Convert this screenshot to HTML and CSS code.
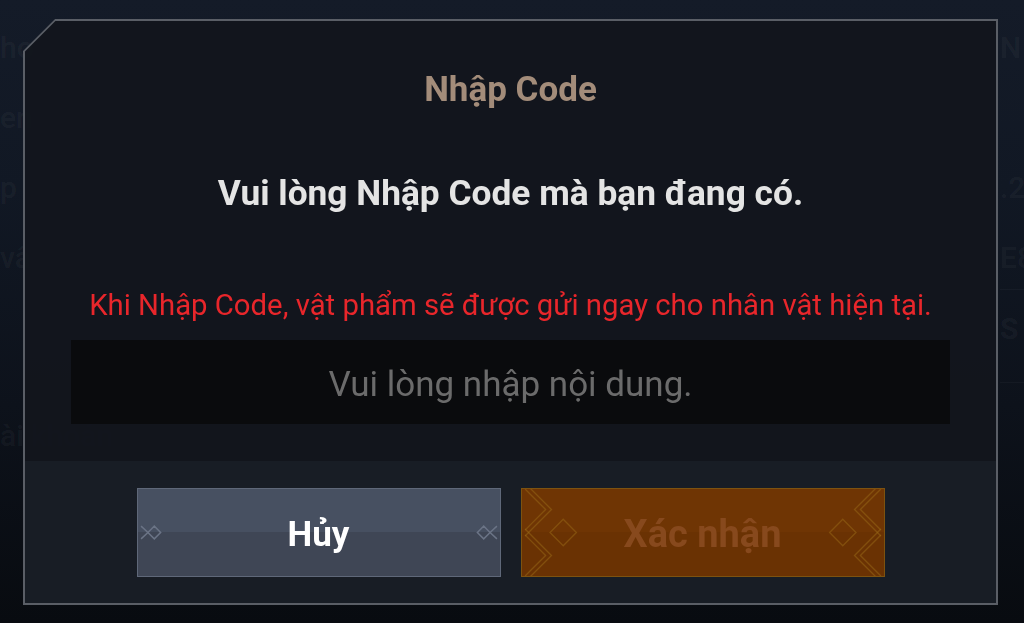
FILE: index.html
```html
<!DOCTYPE html>
<html lang="vi">
<head>
<meta charset="utf-8">
<title>Nhập Code</title>
<link rel="stylesheet" href="styles.css">
</head>
<body>
<div class="page">
  <div class="bg-col bg-left">
    <span class="bg-item">ho</span>
    <span class="bg-item">en</span>
    <span class="bg-item">p</span>
    <span class="bg-item">vâ</span>
    <span class="bg-item bg-far">ài khoản</span>
  </div>
  <div class="bg-col bg-right">
    <span class="bg-item">N</span>
    <span class="bg-item bg-skip">.2</span>
    <span class="bg-item">E8</span>
    <span class="bg-item bg-bold bg-sep">S</span>
  </div>
</div>

<div class="modal">
  <svg class="frame" viewBox="0 0 975 586" preserveAspectRatio="none" aria-hidden="true">
    <polygon points="1,32 32,1 974,1 974,585 1,585" fill="none" stroke="#5a5e66" stroke-width="2"/>
  </svg>
  <div class="modal-body">
    <h1 class="title">Nhập Code</h1>
    <p class="subtitle">Vui lòng Nhập Code mà bạn đang có.</p>
    <p class="warning">Khi Nhập Code, vật phẩm sẽ được gửi ngay cho nhân vật hiện tại.</p>
    <input class="code-input" type="text" placeholder="Vui lòng nhập nội dung.">
  </div>
  <div class="modal-footer">
    <button class="btn btn-cancel" type="button">
      <svg class="ornament" viewBox="0 0 364 89" aria-hidden="true">
        <g fill="none" stroke="#6b7486" stroke-width="1.5">
          <polyline points="0,38 7,44.5 0,51"/>
          <polygon points="7,44.5 13.5,38 20,44.5 13.5,51"/>
          <polyline points="364,38 357,44.5 364,51"/>
          <polygon points="357,44.5 350.5,38 344,44.5 350.5,51"/>
        </g>
      </svg>
      <span class="btn-label">Hủy</span>
    </button>
    <button class="btn btn-confirm" type="button" disabled>
      <svg class="ornament" viewBox="0 0 364 89" aria-hidden="true">
        <g fill="none" stroke="#9a6a18" stroke-width="1.4" stroke-opacity="0.5">
          <g>
            <polygon points="25.5,44.5 39,31 52.5,44.5 39,58"/>
            <polyline points="0,-6 27,21 0,48"/>
            <polyline points="0,0 21,21 0,42"/>
            <polyline points="0,41 27,68 0,95"/>
            <polyline points="0,47 21,68 0,89"/>
          </g>
          <g transform="translate(364,0) scale(-1,1)">
            <polygon points="25.5,44.5 39,31 52.5,44.5 39,58"/>
            <polyline points="0,-6 27,21 0,48"/>
            <polyline points="0,0 21,21 0,42"/>
            <polyline points="0,41 27,68 0,95"/>
            <polyline points="0,47 21,68 0,89"/>
          </g>
        </g>
      </svg>
      <span class="btn-label btn-label-wide">Xác nhận</span>
    </button>
  </div>
</div>
</body>
</html>
```

FILE: styles.css
```css
* {
  box-sizing: border-box;
}

html, body {
  margin: 0;
  padding: 0;
}

body {
  width: 1024px;
  height: 623px;
  overflow: hidden;
  font-family: Roboto, "Noto Sans", "Liberation Sans", sans-serif;
  background: linear-gradient(180deg, #141b28 0%, #111824 30%, #0d121b 65%, #080b10 100%);
}

.page {
  height: 623px;
  display: flex;
  justify-content: space-between;
}

.bg-col {
  display: flex;
  flex-direction: column;
  padding-top: 33px;
  color: rgba(255, 255, 255, 0.05);
  font-size: 30px;
  font-weight: 500;
  line-height: 30px;
  white-space: nowrap;
}

.bg-item {
  height: 70px;
}

.bg-left {
  width: 24px;
  overflow: visible;
}

.bg-far {
  margin-top: 108px;
}

.bg-right {
  width: 24px;
  align-items: flex-start;
}

.bg-skip {
  margin-top: 70px;
}

.bg-bold {
  font-weight: 700;
}

.bg-sep {
  border-top: 1px solid rgba(255, 255, 255, 0.03);
  padding-top: 24px;
  margin-top: -24px;
  height: 94px;
  width: 24px;
  border-bottom: 1px solid rgba(255, 255, 255, 0.03);
}

.modal {
  position: fixed;
  left: 23px;
  top: 19px;
  width: 975px;
  height: 586px;
  padding: 2px;
  display: flex;
  flex-direction: column;
  background: rgba(19, 22, 29, 0.97);
  clip-path: polygon(32px 0, 100% 0, 100% 100%, 0 100%, 0 32px);
}

.frame {
  position: absolute;
  inset: 0;
  width: 100%;
  height: 100%;
  pointer-events: none;
  z-index: 2;
}

.modal-body {
  padding: 51px 44px 0;
  display: flex;
  flex-direction: column;
  align-items: center;
  text-align: center;
}

.title {
  margin: 0;
  font-size: 35px;
  line-height: 35px;
  font-weight: 700;
  color: #a38c7a;
}

.subtitle {
  margin: 69px 0 0;
  font-size: 35.3px;
  line-height: 35px;
  font-weight: 700;
  color: #e4e4e4;
}

.warning {
  margin: 80px 0 0;
  font-size: 29.3px;
  line-height: 29px;
  font-weight: 400;
  color: #e8262b;
}

.code-input {
  margin-top: 20px;
  width: 879px;
  height: 84px;
  border: none;
  outline: none;
  background: #0a0b0d;
  color: #d0d0d0;
  text-align: center;
  font-family: Roboto, "Noto Sans", "Liberation Sans", sans-serif;
  font-size: 35px;
  padding: 4px 0 0;
}

.code-input::placeholder {
  color: #6b6b6b;
  opacity: 1;
}

.modal-footer {
  margin-top: 37px;
  flex: 1;
  background: #181d25;
  display: flex;
  justify-content: center;
  align-items: flex-start;
  gap: 20px;
  padding-top: 27px;
}

.btn {
  position: relative;
  width: 364px;
  height: 89px;
  padding: 0;
  display: flex;
  align-items: center;
  justify-content: center;
  font-family: Roboto, "Noto Sans", "Liberation Sans", sans-serif;
  font-size: 35px;
  font-weight: 700;
  cursor: pointer;
}

.ornament {
  position: absolute;
  inset: 0;
  width: 100%;
  height: 100%;
  overflow: hidden;
}

.btn-label {
  position: relative;
  padding-top: 3px;
}

.btn-label-wide {
  font-size: 38px;
}

.btn-cancel {
  border: 1px solid #5f6879;
  background: linear-gradient(180deg, #475061 0%, #475061 50%, #3f4655 50%, #3f4655 100%);
  color: #ffffff;
}

.btn-confirm {
  border: 1px solid #7d520f;
  background: linear-gradient(180deg, #6f3504 0%, #6f3504 50%, #6a3203 50%, #6a3203 100%);
  color: #87491d;
  cursor: default;
}
```
